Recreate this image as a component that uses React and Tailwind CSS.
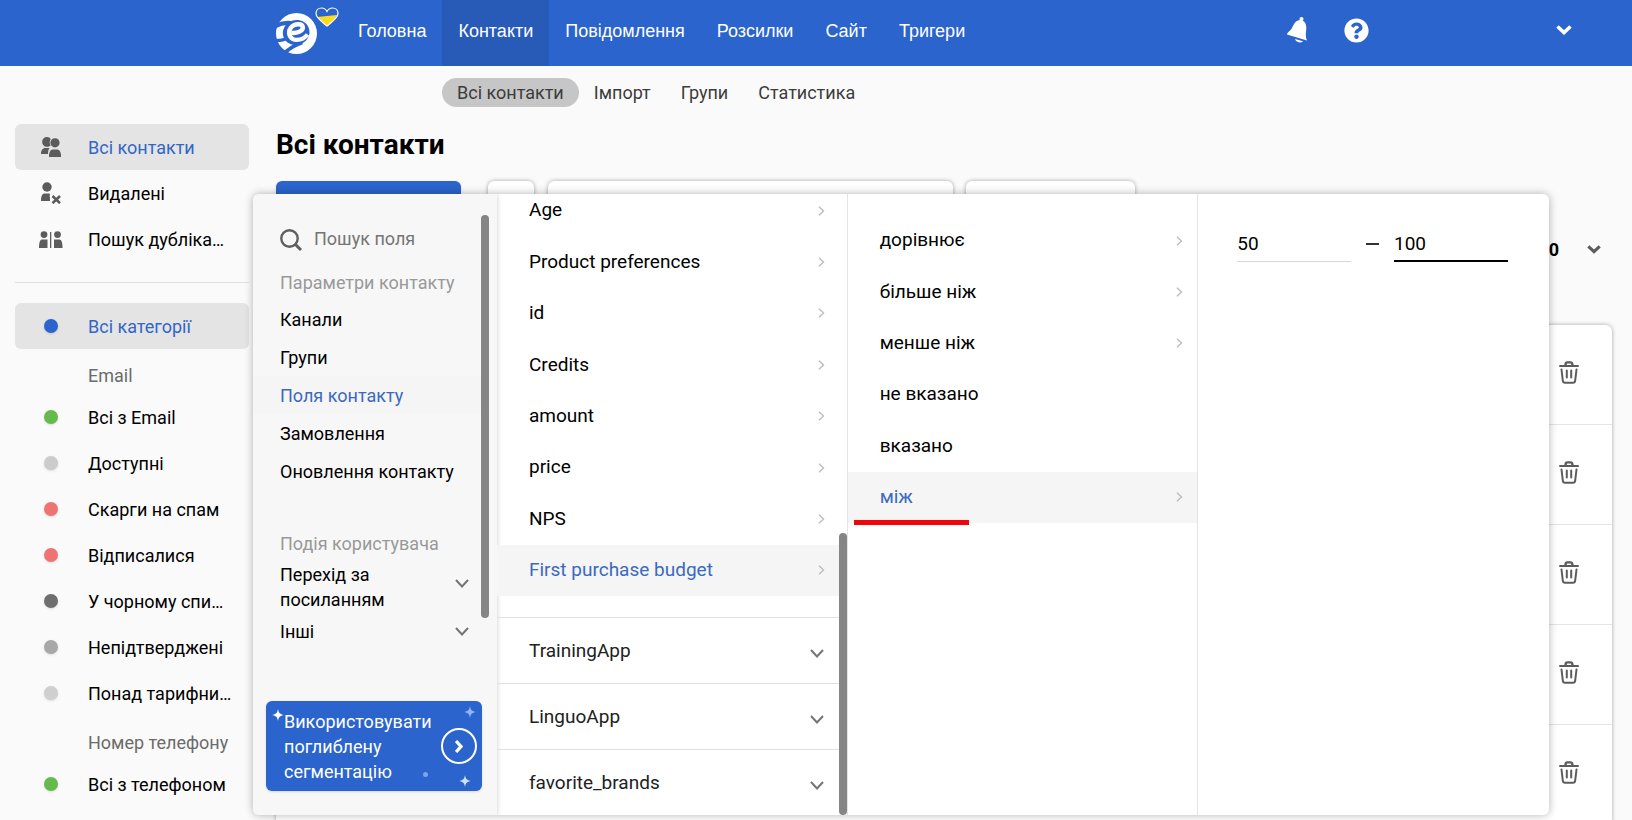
import React from 'react';
import { FaQuestionCircle } from 'react-icons/fa';

const NAV = ['Головна', 'Контакти', 'Повідомлення', 'Розсилки', 'Сайт', 'Тригери'];
const TABS = ['Всі контакти', 'Імпорт', 'Групи', 'Статистика'];

const CATEGORIES = [
  { label: 'Всі з Email', color: 'bg-[#66b94c]' },
  { label: 'Доступні', color: 'bg-[#cccccc]' },
  { label: 'Скарги на спам', color: 'bg-[#ee7474]' },
  { label: 'Відписалися', color: 'bg-[#ee7474]' },
  { label: 'У чорному спи…', color: 'bg-[#6e6e6e]' },
  { label: 'Непідтверджені', color: 'bg-[#a8a8a8]' },
  { label: 'Понад тарифни…', color: 'bg-[#cfcfcf]' }
];

const PARAMS = ['Канали', 'Групи', 'Поля контакту', 'Замовлення', 'Оновлення контакту'];
const FIELDS = ['Age', 'Product preferences', 'id', 'Credits', 'amount', 'price', 'NPS', 'First purchase budget'];
const FIELD_GROUPS = ['TrainingApp', 'LinguoApp', 'favorite_brands'];

const OPERATORS = [
  { label: 'дорівнює', more: true },
  { label: 'більше ніж', more: true },
  { label: 'менше ніж', more: true },
  { label: 'не вказано' },
  { label: 'вказано' },
  { label: 'між', more: true, active: true }
];

const Logo = () => (
  <svg viewBox="0 0 122 122" className="w-[41px] h-[41px]" aria-hidden="true">
    <circle cx="61" cy="61" r="61" fill="#fff" />
    <ellipse cx="60" cy="58" rx="40" ry="37" fill="#2b64cc" transform="rotate(-20 60 58)" />
    <g fill="none" stroke="#2b64cc">
      <path d="M-4 40 C10 32 24 28 44 30" strokeWidth="13" />
      <path d="M-6 82 C8 83 18 82 34 76" strokeWidth="9" />
      <path d="M24 122 C36 106 52 98 78 88" strokeWidth="11" />
    </g>
    <path d="M46 59 C62 61 80 54 80 43 C79 31 56 30 45 43 C32 60 42 80 62 80 C74 80 86 74 94 64" fill="none" stroke="#fff" strokeWidth="13" />
  </svg>
);

const Heart = () => (
  <svg viewBox="0 0 24 20" className="w-6 h-5" aria-hidden="true">
    <path d="M12 19 C7 15 1 11 1 6.500 C1 3 3.500 1 6.500 1 C9 1 11 2.500 12 4.500 C13 2.500 15 1 17.500 1 C20.500 1 23 3 23 6.500 C23 11 17 15 12 19 Z" fill="#2b64cc" />
    <path d="M2 10 L22 8 C20.500 12.500 16 16 12 19 C8 16 4 13 2 10 Z" fill="#fbdc1c" />
    <path d="M12 19 C7 15 1 11 1 6.500 C1 3 3.500 1 6.500 1 C9 1 11 2.500 12 4.500 C13 2.500 15 1 17.500 1 C20.500 1 23 3 23 6.500 C23 11 17 15 12 19 Z" fill="none" stroke="#fff" strokeWidth="1.200" />
  </svg>
);

const Bell = () => (
  <svg viewBox="0 0 22 28" className="w-[22px] h-7 text-white" fill="currentColor" aria-hidden="true">
    <circle cx="15.500" cy="3" r="2" />
    <path d="M15 4 C18.500 4.500 20.500 8 20.300 12 C20.200 16 19 20 21 24.500 L1 18.500 C1 16.500 4 15.500 6 12 C8 8 10 3.500 15 4 Z" />
    <path d="M9 23 L17 25.300 C15 27.500 10 26.500 9 23 Z" />
  </svg>
);

const PeopleIcon = () => (
  <svg viewBox="0 0 20 20" className="w-5 h-5" fill="#5c5c5c" aria-hidden="true">
    <path d="M6 0 C8 0 9 .8 9.700 2 C8.500 4 8.400 6.500 9.600 8.500 C8.800 9.400 7.500 9.800 6 9.800 C3 9.800 1.200 7.500 1.200 5 C1.200 2.300 3 0 6 0 Z" />
    <circle cx="14" cy="5.800" r="4.600" />
    <path d="M0 17 C0 13.500 1.500 11 4.500 11 L8.500 11 C7.500 12.500 7 14 7 17 Z" />
    <path d="M8 20 C8 15 9 12.500 12.500 12.500 L15.500 12.500 C19 12.500 20 15 20 20 Z" />
  </svg>
);

const PersonRemoveIcon = () => (
  <svg viewBox="0 0 20 22" className="w-5 h-[22px]" fill="#5c5c5c" aria-hidden="true">
    <circle cx="6" cy="5" r="4.700" />
    <path d="M0 19 C0 14 1 11.500 4 11.500 L8 11.500 C10 11.500 8 14 9 15.500 L9 19 Z" />
    <path d="M11.500 14 L19 21.200 M19 14 L11.500 21.200" stroke="#5c5c5c" strokeWidth="2.600" />
  </svg>
);

const DuplicatesIcon = () => (
  <svg viewBox="0 0 24 17" className="w-6 h-[17px]" fill="#5c5c5c" aria-hidden="true">
    <circle cx="5" cy="3.600" r="3.400" />
    <circle cx="18.500" cy="3.600" r="3.400" />
    <path d="M0 17 C0 11 1 8.500 3.500 8.500 L8.500 8.500 L8.500 17 Z" />
    <path d="M15 17 L15 8.500 L20 8.500 C22.500 8.500 23.500 11 23.500 17 Z" />
    <rect x="11" y="1" width="1.300" height="16" />
  </svg>
);

const SearchIcon = () => (
  <svg viewBox="0 0 22 22" className="w-[22px] h-[22px] shrink-0" fill="none" stroke="#5f5f5f" strokeWidth="2.400" aria-hidden="true">
    <circle cx="9.500" cy="9.500" r="8.200" />
    <path d="M15 15 L21 21" strokeWidth="3" />
  </svg>
);

const ArrowRight = () => (
  <svg viewBox="0 0 7 10" className="w-[7px] h-[10px]" fill="none" stroke="#bdbdbd" strokeWidth="1.400" aria-hidden="true">
    <path d="M1 .8 L5.500 5 L1 9.200" />
  </svg>
);

const ArrowDown = () => (
  <svg viewBox="0 0 14 9" className="w-[14px] h-[9px] shrink-0" fill="none" stroke="#757575" strokeWidth="2" aria-hidden="true">
    <path d="M1 1 L7 7.500 L13 1" />
  </svg>
);

const ChevronBold = ({ className }) => (
  <svg viewBox="0 0 16 10" className={className} fill="none" stroke="currentColor" strokeWidth="3.600" aria-hidden="true">
    <path d="M1.500 1.500 L8 7.500 L14.500 1.500" />
  </svg>
);

const TrashIcon = () => (
  <svg viewBox="0 0 20 23" className="w-5 h-[23px]" fill="none" stroke="#5c5c5c" strokeWidth="2" strokeLinecap="round" aria-hidden="true">
    <path d="M1 5 L19 5" />
    <path d="M6.500 4.500 C6.500 2 7 1.400 8.500 1.400 L11.500 1.400 C13 1.400 13.500 2 13.500 4.500" strokeWidth="2.400" />
    <path d="M2.500 8.500 L3.800 19.500 C4 21.300 4.500 21.800 6 21.800 L14 21.800 C15.500 21.800 16 21.300 16.200 19.500 L17.500 8.500" />
    <path d="M7.800 9.500 L7.800 16.500 M12.200 9.500 L12.200 16.500" />
  </svg>
);

const Sparkle = ({ className }) => (
  <svg viewBox="0 0 12 12" className={`absolute w-3 h-3 ${className}`} fill="currentColor" aria-hidden="true">
    <path d="M6 0 C6.600 4 8 5.200 12 6 C8 6.800 6.600 8 6 12 C5.400 8 4 6.800 0 6 C4 5.200 5.400 4 6 0 Z" />
  </svg>
);

const SideItem = ({ icon, label, active }) => (
  <a
    href="#"
    className={`flex items-center h-[46px] rounded-md ${active ? 'bg-[#e4e4e4] text-[#3266c7]' : 'text-black'}`}
  >
    <span className="w-[72px] mr-px flex justify-center">{icon}</span>
    <span className="whitespace-nowrap">{label}</span>
  </a>
);

const Dot = ({ color }) => <span className={`w-[14px] h-[14px] rounded-full shadow-sm ${color}`} />;

const Header = () => (
  <header className="flex items-center h-[66px] shrink-0 bg-[#2b64cc] pl-[276px] pr-[60px] text-white">
    <a href="#" className="relative" aria-label="Логотип">
      <Logo />
      <span className="absolute -top-[6px] left-[39px]"><Heart /></span>
    </a>
    <nav className="flex h-full ml-[25px] font-['Liberation_Sans',sans-serif] text-[18px]">
      {NAV.map((item) => (
        <a
          key={item}
          href="#"
          className={`flex items-center px-4 pb-1 ${item === 'Контакти' ? 'bg-[#285ab8]' : ''}`}
        >
          {item}
        </a>
      ))}
    </nav>
    <div className="flex items-center ml-auto pb-[6px]">
      <button type="button" aria-label="Сповіщення"><Bell /></button>
      <button type="button" aria-label="Допомога" className="ml-9"><FaQuestionCircle className="w-[25px] h-[25px]" /></button>
      <button type="button" aria-label="Профіль" className="ml-[187px]"><ChevronBold className="w-4 h-[10px]" /></button>
    </div>
  </header>
);

const Sidebar = () => (
  <aside className="w-[249px] shrink-0 pl-[15px] pt-[58px]">
    <SideItem icon={<PeopleIcon />} label="Всі контакти" active />
    <SideItem icon={<PersonRemoveIcon />} label="Видалені" />
    <SideItem icon={<DuplicatesIcon />} label="Пошук дубліка…" />
    <hr className="mt-5 mb-5 border-[#e0e0e0]" />
    <SideItem icon={<Dot color="bg-[#2b64cc]" />} label="Всі категорії" active />
    <h2 className="h-[45px] pl-[73px] pt-1 leading-[46px] text-[#6b6b6b]">Email</h2>
    {CATEGORIES.map((cat) => (
      <SideItem key={cat.label} icon={<Dot color={cat.color} />} label={cat.label} />
    ))}
    <h2 className="h-[45px] pl-[73px] pt-1 leading-[46px] text-[#6b6b6b]">Номер телефону</h2>
    <SideItem icon={<Dot color="bg-[#66b94c]" />} label="Всі з телефоном" />
  </aside>
);

const ParamsColumn = () => (
  <div className="relative flex flex-col bg-[#f7f7f7] pt-7 pb-6 shadow-[1px_0_4px_rgba(0,0,0,0.15)]">
    <label className="flex items-center gap-3 h-9 pl-[27px] pr-5">
      <SearchIcon />
      <input type="text" placeholder="Пошук поля" aria-label="Пошук поля" className="w-full min-w-0 pb-1 bg-transparent outline-none placeholder:text-[#757575]" />
    </label>
    <h3 className="mt-2 leading-[34px] pl-[27px] text-[#999999]">Параметри контакту</h3>
    {PARAMS.map((item) => (
      <button
        key={item}
        type="button"
        className={`h-[38px] mr-3 pl-[27px] text-left ${item === 'Поля контакту' ? 'bg-[#f5f5f5] text-[#3b69c0]' : 'text-black'}`}
      >
        {item}
      </button>
    ))}
    <h3 className="mt-9 leading-[36px] pl-[27px] text-[#999999]">Подія користувача</h3>
    <button type="button" className="flex items-center justify-between pl-[27px] pr-7 text-left leading-[25px]">
      <span className="w-[120px]">Перехід за посиланням</span>
      <span className="pb-2"><ArrowDown /></span>
    </button>
    <button type="button" className="flex items-center justify-between h-[38px] pl-[27px] pr-7 text-left">
      <span>Інші</span>
      <ArrowDown />
    </button>
    <a href="#" className="relative flex items-center justify-between h-[90px] mt-auto ml-[13px] mr-[15px] pl-[18px] pr-[5px] rounded-md bg-[#2b64cc] text-white leading-[25px] shadow">
      <span className="w-[145px]">Використовувати поглиблену сегментацію</span>
      <span className="w-9 h-9 rounded-full border-2 border-white flex items-center justify-center">
        <svg viewBox="0 0 8 13" className="w-2 h-[13px]" fill="none" stroke="#fff" strokeWidth="3.200" aria-hidden="true">
          <path d="M1 1 L6 6.500 L1 12" />
        </svg>
      </span>
      <Sparkle className="top-2 left-[6px] text-white" />
      <Sparkle className="top-[5px] right-[6px] text-[#8fb4fb]" />
      <Sparkle className="bottom-1 right-[11px] text-[#cfe0ff]" />
      <span className="absolute w-[5px] h-[5px] rounded-full bottom-[14px] right-[54px] bg-[#7ba3f2]" />
    </a>
    <span className="absolute top-[21px] right-2 w-2 h-[403px] rounded-full bg-[#858585]" />
  </div>
);

const FieldsColumn = () => (
  <div className="relative border-r border-[#e4e4e4] overflow-hidden text-[19px]">
    <div className="flex flex-col h-[411px] -mt-[9px] mr-2">
      {FIELDS.map((item) => (
        <button
          key={item}
          type="button"
          className={`flex-1 flex items-center justify-between pl-8 pr-[14px] ${item === 'First purchase budget' ? 'bg-[#f5f5f5] text-[#3b69c0]' : 'text-black'}`}
        >
          {item}
          <ArrowRight />
        </button>
      ))}
    </div>
    <div className="mt-[21px]">
      {FIELD_GROUPS.map((item) => (
        <button
          key={item}
          type="button"
          className="flex items-center justify-between w-full h-[66px] pt-[2px] pl-8 pr-[23px] border-t border-[#e0e0e0] text-[#212121]"
        >
          {item}
          <span className="pt-1"><ArrowDown /></span>
        </button>
      ))}
    </div>
    <span className="absolute bottom-0 right-0 w-2 h-[282px] rounded-full bg-[#858585]" />
  </div>
);

const OperatorsColumn = () => (
  <div className="border-r border-[#e4e4e4] pt-[21px] text-[19px]">
    <div className="flex flex-col h-[308px]">
      {OPERATORS.map((op) => (
        <button
          key={op.label}
          type="button"
          className={`relative flex-1 flex items-center justify-between pl-8 pr-[14px] ${op.active ? 'bg-[#f5f5f5] text-[#3b69c0]' : 'text-black'}`}
        >
          {op.label}
          {op.more && <ArrowRight />}
          {op.active && <span className="absolute left-[6px] -bottom-[2px] w-[115px] h-[5px] bg-[#f0060a]" />}
        </button>
      ))}
    </div>
  </div>
);

const RangeColumn = () => (
  <div className="flex items-start justify-between pt-8 pl-[39px] pr-[41px] text-[19px]">
    <input type="text" defaultValue="50" aria-label="Від" className="w-[114px] h-9 border-b border-[#d8d8d8] outline-none" />
    <span className="w-[13px] h-[2px] mt-[17px] bg-[#333333]" />
    <input type="text" defaultValue="100" aria-label="До" className="w-[114px] h-9 border-b-2 border-black outline-none" />
  </div>
);

const App = () => {
  return (
    <div className="h-screen overflow-hidden flex flex-col bg-[#fafafa] text-black font-['Roboto',sans-serif] text-[18px]">
      <Header />
      <div className="flex">
        <Sidebar />
        <main className="flex-1 min-w-0 ml-[27px] mr-5 pt-3">
          <nav className="flex ml-[166px] text-[#3c3c3c]">
            {TABS.map((tab) => (
              <a
                key={tab}
                href="#"
                className={`h-[29px] leading-[29px] px-[15px] rounded-full ${tab === 'Всі контакти' ? 'bg-[#c6c6c6]' : ''}`}
              >
                {tab}
              </a>
            ))}
          </nav>
          <h1 className="mt-[18px] text-[28px] leading-[40px] font-bold">Всі контакти</h1>

          <div className="relative mt-4">
            <div className="flex h-12">
              <button type="button" aria-label="Додати контакт" className="w-[185px] rounded-md bg-[#2b64cc] shadow" />
              <button type="button" aria-label="Дії" className="ml-[27px] w-[46px] rounded-md bg-white shadow-[0_0_4px_rgba(0,0,0,0.35)]" />
              <div className="ml-[14px] w-[405px] rounded-md bg-white shadow-[0_0_4px_rgba(0,0,0,0.35)]" />
              <div className="ml-[13px] w-[169px] rounded-md bg-white shadow-[0_0_4px_rgba(0,0,0,0.35)]" />
            </div>
            <div className="flex items-center justify-end gap-7 h-10 pr-[11px]">
              <span className="font-bold">0</span>
              <button type="button" aria-label="Розгорнути"><ChevronBold className="w-[14px] h-[9px] text-[#5c5c5c]" /></button>
            </div>
            <ul className="mt-14 rounded-md bg-white shadow-[0_0_4px_rgba(0,0,0,0.35)]">
              {[1, 2, 3, 4, 5].map((row) => (
                <li key={row} className="flex items-center justify-end h-[100px] pb-1 pr-[33px] border-b border-[#e4e4e4]">
                  <button type="button" aria-label="Видалити"><TrashIcon /></button>
                </li>
              ))}
            </ul>

            {/* segment builder dropdown */}
            <section className="absolute top-[13px] -left-[23px] right-[63px] grid grid-cols-[244px_1fr_1fr_1fr] rounded-md bg-white overflow-hidden shadow-[0_0_8px_rgba(0,0,0,0.3)]">
              <ParamsColumn />
              <FieldsColumn />
              <OperatorsColumn />
              <RangeColumn />
            </section>
          </div>
        </main>
      </div>
    </div>
  );
};

export default App;
